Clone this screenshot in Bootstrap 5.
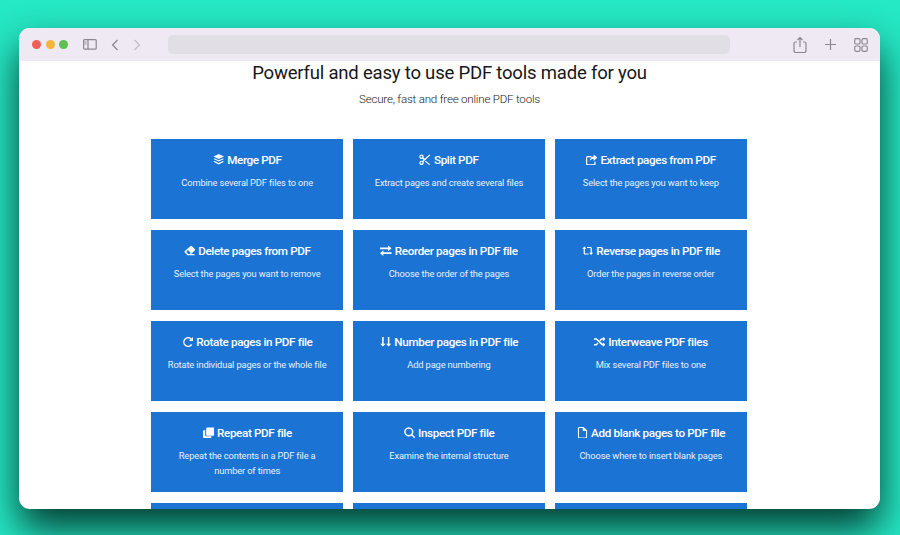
<!DOCTYPE html>
<html lang="en"><head><meta charset="utf-8"><title>PDF tools</title>
<link href="https://cdn.jsdelivr.net/npm/bootstrap@5.3.0/dist/css/bootstrap.min.css" rel="stylesheet">
<style>
html,body{height:100%;}
body{margin:0;overflow:hidden;background:#25e8c4;font-family:Roboto,"Liberation Sans",sans-serif;padding:28px 20px 26px 19px;}
.appwin{height:481px;width:861px;border-radius:11px;overflow:hidden;background:#fff;box-shadow:0 20px 38px rgba(0,35,28,.88);}
.tbar{height:33px;background:#eee9f2;flex:none;padding:0 12px 0 13px;}
.lite{width:9px;height:9px;border-radius:50%;margin-right:4.5px;}
.l-r{background:#ee5f57}.l-y{background:#f2b63c}.l-g{background:#5dbf4f}
.urlbar{width:562px;height:19px;background:#e2dee5;border-radius:5px;margin-left:27px;}
.tic{display:block;fill:none;stroke:#8b888f;stroke-width:1.2;}
.tic-dim{stroke:#c3c0c8;}
.tic-side{margin-left:10px;}
.tic-back{margin-left:14px;stroke-width:1.3;}
.tic-fwd{margin-left:14px;stroke-width:1.3;}
.tic-plus{margin-left:17px;}
.tic-grid{margin-left:17px;}
.pagebody{padding-top:2px;}
.hd{font-size:18.55px;line-height:20px;font-weight:400;color:#17171a;margin:0 0 8px;letter-spacing:-.21px;}
.sb{font-size:11.6px;line-height:16px;font-weight:300;color:#222;margin:0 0 32px;letter-spacing:-.22px;}
.tools{width:596px;margin-left:132px;}
.toolrow{--bs-gutter-x:9.5px;--bs-gutter-y:11px;}
.tool{height:80px;background:#1b74d4;color:#fff;padding-top:13px;}
.tool h3{font-size:11.7px;line-height:17px;font-weight:500;margin:0 0 6px;letter-spacing:-.37px;}
.tool p{font-size:9.3px;line-height:15px;font-weight:400;margin:0 auto;color:#e8f1fb;max-width:165px;letter-spacing:-.14px;}
.tool svg{display:inline-block;width:11.5px;height:11.5px;vertical-align:-1px;margin-right:3px;fill:#fff;}
</style></head><body>
<div class="appwin d-flex flex-column">
 <div class="tbar d-flex align-items-center">
  <span class="lite l-r"></span><span class="lite l-y"></span><span class="lite l-g"></span>
  <svg class="tic tic-side" width="14" height="11" viewBox="0 0 14 11"><rect x=".6" y=".6" width="12.6" height="9.6" rx="1"/><path d="M5 .6v9.6M1.500 3h2M1.500 5h2"/></svg>
  <svg class="tic tic-back" width="8" height="12" viewBox="0 0 8 12"><path d="M6.500 1 1.600 6l4.900 5"/></svg>
  <svg class="tic tic-dim tic-fwd" width="8" height="12" viewBox="0 0 8 12"><path d="M1.500 1l4.900 5-4.900 5"/></svg>
  <div class="urlbar"></div>
  <svg class="tic ms-auto" width="14" height="18" viewBox="0 0 14 18"><path d="M4 6H2.500A1.500 1.500 0 0 0 1 7.500v7A2 2 0 0 0 3 16.500h8a2 2 0 0 0 2-2v-7A1.500 1.500 0 0 0 11.500 6H10M7 11V1.500M4.500 4 7 1.500 9.500 4"/></svg>
  <svg class="tic tic-plus" width="13" height="13" viewBox="0 0 13 13"><path d="M6.500 1v11M1 6.500h11"/></svg>
  <svg class="tic tic-grid" width="14" height="14" viewBox="0 0 14 14"><rect x=".7" y=".7" width="5.300" height="5.300" rx="1.200"/><rect x="8" y=".7" width="5.300" height="5.300" rx="1.200"/><rect x=".7" y="8" width="5.300" height="5.300" rx="1.200"/><rect x="8" y="8" width="5.300" height="5.300" rx="1.200"/></svg>
 </div>
 <main class="pagebody text-center flex-grow-1">
  <h1 class="hd">Powerful and easy to use PDF tools made for you</h1>
  <p class="sb">Secure, fast and free online PDF tools</p>
  <div class="tools">
   <div class="row row-cols-3 toolrow">
    <div class="col"><div class="tool"><h3><svg viewBox="0 0 12 12"><path d="M6 0l5.500 2.600L6 5.200.5 2.600zM.5 5.200l1.300-.6L6 6.600l4.200-2 1.300.6L6 7.800zM.5 8l1.300-.6L6 9.400l4.200-2 1.300.6L6 11z"/></svg>Merge PDF</h3><p>Combine several PDF files to one</p></div></div>
    <div class="col"><div class="tool"><h3><svg viewBox="0 0 12 12"><path fill-rule="evenodd" d="M2.600.5a2.300 2.300 0 0 1 2 3.400L6 5l4-3.800c.6-.5 1.300-.4 1.800 0L4.600 8.100a2.300 2.300 0 1 1-1-.9L4.700 6 3.600 4.900A2.300 2.300 0 1 1 2.600.5zm0 1.300a1 1 0 1 0 0 2 1 1 0 0 0 0-2zm0 6.400a1 1 0 1 0 0 2 1 1 0 0 0 0-2zM7 7l4.800 3.900c-.5.400-1.200.5-1.800 0L6.200 7.700z"/></svg>Split PDF</h3><p>Extract pages and create several files</p></div></div>
    <div class="col"><div class="tool"><h3><svg viewBox="0 0 12 12"><path d="M1.800 2h4v1.300H2a.7.7 0 0 0-.7.7v6c0 .4.300.7.700.7h6a.7.7 0 0 0 .7-.7V8H10v2.200A1.800 1.800 0 0 1 8.200 12H1.800A1.800 1.800 0 0 1 0 10.200V3.800A1.800 1.800 0 0 1 1.800 2zM8 .5l4 3.300L8 7.200V5.300c-2 0-3.300.5-4 2 0-2.700 1.500-4.500 4-4.800z"/></svg>Extract pages from PDF</h3><p>Select the pages you want to keep</p></div></div>

    <div class="col"><div class="tool"><h3><svg viewBox="0 0 12 12"><path d="M6.600 1.200a1.200 1.200 0 0 1 1.700 0l2.900 2.900a1.200 1.200 0 0 1 0 1.700L7.500 9.500H11v1.200H3.700L.9 7.900a1.200 1.200 0 0 1 0-1.700zM4.200 5.300 2.300 7.200l2.100 2.300h1.500l1.200-1.200z"/></svg>Delete pages from PDF</h3><p>Select the pages you want to remove</p></div></div>
    <div class="col"><div class="tool"><h3><svg viewBox="0 0 12 12"><path d="M8.500.5 12 3.500 8.500 6.500V4.500H0v-2h8.500zM3.500 5.500v2H12v2H3.500v2L0 8.500z"/></svg>Reorder pages in PDF file</h3><p>Choose the order of the pages</p></div></div>
    <div class="col"><div class="tool"><h3><svg viewBox="0 0 12 12"><path d="M2.600 1.500.2 4h1.500v4.500c0 .9.700 1.500 1.500 1.500h3.600V8.800H3.400a.4.400 0 0 1-.4-.4V4h1.500zM9.400 10.500 11.800 8h-1.500V3.500c0-.9-.7-1.500-1.500-1.500H5.200v1.200h3.400c.2 0 .4.200.4.400V8H7.500z"/></svg>Reverse pages in PDF file</h3><p>Order the pages in reverse order</p></div></div>

    <div class="col"><div class="tool"><h3><svg viewBox="0 0 12 12"><path d="M11.500 1v4.300H7.200l1.700-1.700A3.700 3.700 0 1 0 9.500 8.400l1.300.8A5.200 5.200 0 1 1 10 2.500z"/></svg>Rotate pages in PDF file</h3><p>Rotate individual pages or the whole file</p></div></div>
    <div class="col"><div class="tool"><h3><svg viewBox="0 0 12 12"><path d="M2.200 1h1.600v7h2L3 11 .2 8h2zM8.200 1h1.600v7h2L9 11 6.200 8h2z"/></svg>Number pages in PDF file</h3><p>Add page numbering</p></div></div>
    <div class="col"><div class="tool"><h3><svg viewBox="0 0 12 12"><path d="M9.300.8 12 3.100 9.300 5.400V3.800H8.100L6.600 5.500l-1-1.100 1.900-2.100h1.800zM0 2.300h2.800l6.500 6h0V6.700L12 9l-2.700 2.300V9.800H8.300l-6-6H0zM0 8.300h2.200l1.500-1.600 1 1.100-1.900 2H0z"/></svg>Interweave PDF files</h3><p>Mix several PDF files to one</p></div></div>

    <div class="col"><div class="tool"><h3><svg viewBox="0 0 12 12"><path d="M4.500.5h6.300c.6 0 1.200.5 1.200 1.200V8c0 .7-.6 1.200-1.200 1.200H4.500c-.7 0-1.200-.5-1.200-1.200V1.700c0-.7.500-1.200 1.200-1.200zM1.200 3.300h1.100v5.200c0 .7.500 1.200 1.200 1.200h5.200v1.100c0 .7-.5 1.200-1.200 1.200H1.200C.5 11.500 0 11 0 10.300V4.500c0-.7.500-1.200 1.200-1.200z"/></svg>Repeat PDF file</h3><p>Repeat the contents in a PDF file a number of times</p></div></div>
    <div class="col"><div class="tool"><h3><svg viewBox="0 0 12 12"><path fill-rule="evenodd" d="M5 .2a4.800 4.800 0 0 1 3.900 7.600l2.900 2.900-1.100 1.100-2.900-2.900A4.800 4.800 0 1 1 5 .2zm0 1.500a3.300 3.300 0 1 0 0 6.600 3.300 3.300 0 0 0 0-6.600z"/></svg>Inspect PDF file</h3><p>Examine the internal structure</p></div></div>
    <div class="col"><div class="tool"><h3><svg viewBox="0 0 12 12"><path fill-rule="evenodd" d="M2.500 0h4.300L10.500 3.500v7A1.500 1.500 0 0 1 9 12H2.500A1.500 1.500 0 0 1 1 10.500v-9A1.500 1.500 0 0 1 2.500 0zm0 1.100a.4.400 0 0 0-.4.400v9c0 .2.200.4.400.4H9a.4.400 0 0 0 .4-.4V4.300H6V1.100z"/></svg>Add blank pages to PDF file</h3><p>Choose where to insert blank pages</p></div></div>

    <div class="col"><div class="tool"></div></div>
    <div class="col"><div class="tool"></div></div>
    <div class="col"><div class="tool"></div></div>
   </div>
  </div>
 </main>
</div>
<script src="https://cdn.jsdelivr.net/npm/bootstrap@5.3.0/dist/js/bootstrap.bundle.min.js"></script>
</body></html>
